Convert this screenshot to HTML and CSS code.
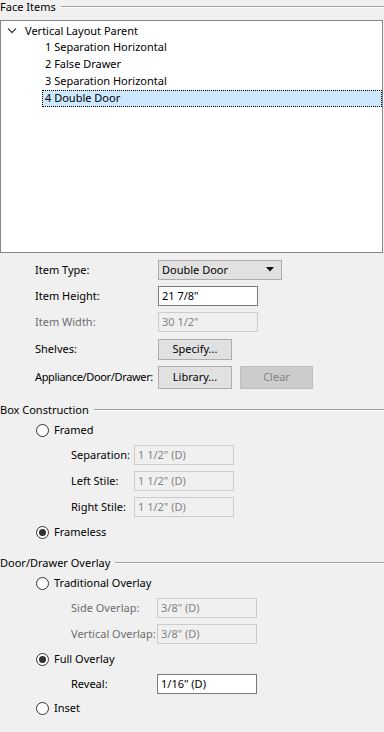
FILE: index.html
```html
<!DOCTYPE html>
<html>
<head>
    <title>Face Items</title>
    <meta charset="UTF-8">
    <meta name="viewport" content="width=device-width, initial-scale=1.0">
    <link rel="stylesheet" href="styles.css">
</head>
<body>
    <div class="group-title first"><span>Face Items</span></div>
    <div class="tree">
        <div class="tree-row parent">
            <svg class="chevron" width="10" height="7" viewBox="0 0 10 7"><path d="M1 1.5 L5 5.5 L9 1.5" fill="none" stroke="#444" stroke-width="1.3"/></svg>
            <span>Vertical Layout Parent</span>
        </div>
        <div class="tree-row child">1 Separation Horizontal</div>
        <div class="tree-row child">2 False Drawer</div>
        <div class="tree-row child">3 Separation Horizontal</div>
        <div class="tree-row child selected">4 Double Door</div>
    </div>

    <div class="form">
        <div class="row">
            <label class="label">Item Type:</label>
            <div class="combo">
                <span>Double Door</span>
                <svg width="8" height="5" viewBox="0 0 8 5"><path d="M0 0 H8 L4 4.5 Z" fill="#111"/></svg>
            </div>
        </div>
        <div class="row">
            <label class="label">Item Height:</label>
            <div class="input">21 7/8"</div>
        </div>
        <div class="row">
            <label class="label disabled">Item Width:</label>
            <div class="input disabled">30 1/2"</div>
        </div>
        <div class="row tall">
            <label class="label">Shelves:</label>
            <button class="btn small">Specify...</button>
        </div>
        <div class="row tall">
            <label class="label tight">Appliance/Door/Drawer:</label>
            <button class="btn">Library...</button>
            <button class="btn disabled">Clear</button>
        </div>
    </div>

    <div class="group-title box-title"><span>Box Construction</span></div>
    <div class="options">
        <div class="radio-row"><span class="radio"></span>Framed</div>
        <div class="sub-row box">
            <label class="sub-label">Separation:</label>
            <div class="input disabled">1 1/2" (D)</div>
        </div>
        <div class="sub-row box">
            <label class="sub-label">Left Stile:</label>
            <div class="input disabled">1 1/2" (D)</div>
        </div>
        <div class="sub-row box">
            <label class="sub-label">Right Stile:</label>
            <div class="input disabled">1 1/2" (D)</div>
        </div>
        <div class="radio-row"><span class="radio checked"></span>Frameless</div>
    </div>

    <div class="group-title overlay-title"><span>Door/Drawer Overlay</span></div>
    <div class="options">
        <div class="radio-row"><span class="radio"></span>Traditional Overlay</div>
        <div class="sub-row overlay">
            <label class="sub-label disabled">Side Overlap:</label>
            <div class="input disabled">3/8" (D)</div>
        </div>
        <div class="sub-row overlay">
            <label class="sub-label disabled">Vertical Overlap:</label>
            <div class="input disabled">3/8" (D)</div>
        </div>
        <div class="radio-row"><span class="radio checked"></span>Full Overlay</div>
        <div class="sub-row overlay">
            <label class="sub-label">Reveal:</label>
            <div class="input">1/16" (D)</div>
        </div>
        <div class="radio-row last"><span class="radio"></span>Inset</div>
    </div>
</body>
</html>
```

FILE: styles.css
```css
body {
    margin: 0;
    background-color: #f0f0f0;
    font-family: 'Noto Sans', sans-serif;
    font-size: 11px;
    color: #000;
    width: 384px;
    height: 732px;
    overflow: hidden;
}

.group-title {
    display: flex;
    align-items: center;
    height: 16px;
    line-height: 14px;
}
.group-title span {
    white-space: nowrap;
    padding-right: 5px;
}
.group-title::after {
    content: "";
    flex: 1;
    border-top: 1px solid #a0a0a0;
    border-bottom: 1px solid #fff;
    margin-top: 0;
}
.group-title.first {
    height: 14px;
    margin-bottom: 6px;
}
.box-title {
    margin-top: 11px;
}
.overlay-title {
    margin-top: 11px;
}

.tree {
    height: 230px;
    background-color: #fff;
    border: 1px solid #828790;
    margin-right: 1px;
    padding-top: 1px;
}
.tree-row {
    height: 17px;
    line-height: 16px;
    white-space: nowrap;
}
.tree-row.parent {
    display: flex;
    align-items: center;
}
.chevron {
    margin-left: 6px;
    margin-right: 8px;
}
.tree-row.child {
    margin-left: 41px;
    padding-left: 2px;
    border: 1px dotted transparent;
    height: 15px;
    line-height: 14px;
}
.tree-row.child.selected {
    background-color: #cce8ff;
    border-color: #000;
}

.form {
    padding-left: 35px;
    margin-top: 4px;
}
.row {
    display: flex;
    align-items: center;
    height: 26px;
    white-space: nowrap;
}
.row.tall {
    height: 28px;
}
.label {
    width: 123px;
    flex-shrink: 0;
    line-height: 14px;
    padding-bottom: 1px;
}
.label.tight {
    letter-spacing: -0.35px;
}
.disabled {
    color: #6d6d6d;
}

.input {
    box-sizing: border-box;
    width: 100px;
    height: 20px;
    line-height: 17px;
    padding-left: 3px;
    background-color: #fff;
    border: 1px solid #7a7a7a;
}
.input.disabled {
    background-color: #f0f0f0;
    border-color: #cccccc;
    color: #838383;
}

.combo {
    box-sizing: border-box;
    width: 124px;
    height: 20px;
    display: flex;
    align-items: center;
    justify-content: space-between;
    padding: 0 7px 1px 3px;
    background-color: #e1e1e1;
    border: 1px solid #adadad;
}

.btn {
    box-sizing: border-box;
    width: 74px;
    height: 23px;
    padding: 0 0 1px;
    font-family: inherit;
    font-size: 11px;
    color: #000;
    background-color: #e1e1e1;
    border: 1px solid #adadad;
}
.btn.small {
    height: 21px;
}
.btn.disabled {
    width: 73px;
    margin-left: 8px;
    background-color: #cccccc;
    border-color: #bfbfbf;
    color: #838383;
}

.radio-row {
    display: flex;
    align-items: center;
    height: 24px;
    line-height: 14px;
    padding-left: 36px;
}
.radio-row.last {
    height: 22px;
}
.radio {
    box-sizing: border-box;
    width: 13px;
    height: 13px;
    border: 1px solid #333;
    border-radius: 50%;
    background-color: #fff;
    margin-right: 5px;
    display: flex;
    align-items: center;
    justify-content: center;
}
.radio.checked::after {
    content: "";
    width: 7px;
    height: 7px;
    border-radius: 50%;
    background-color: #333;
}

.sub-row {
    display: flex;
    align-items: center;
    height: 26px;
    padding-left: 71px;
    white-space: nowrap;
}
.sub-label {
    flex-shrink: 0;
    line-height: 14px;
    padding-bottom: 1px;
}
.sub-row.box .sub-label {
    width: 63px;
}
.sub-row.overlay .sub-label {
    width: 86px;
}
```
